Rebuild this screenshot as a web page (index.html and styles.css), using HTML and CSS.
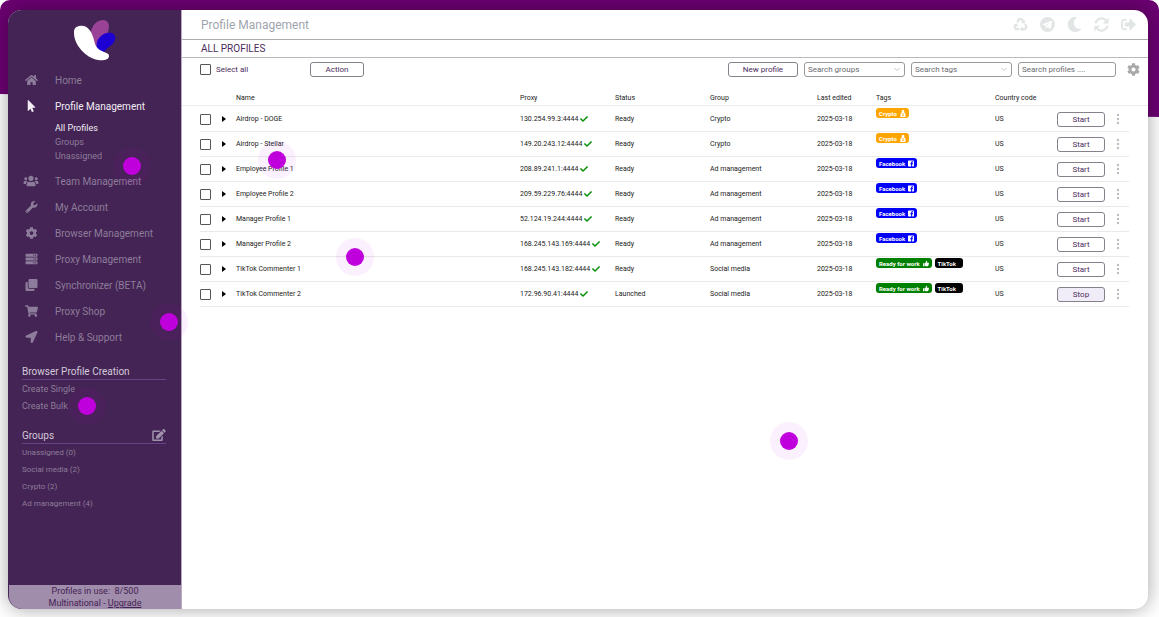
FILE: index.html
```html
<!DOCTYPE html>
<html lang="en">
<head>
<meta charset="utf-8">
<meta name="viewport" content="width=device-width, initial-scale=1">
<title>Profile Management</title>
<link rel="stylesheet" href="styles.css">
</head>
<body>
<svg class="sprite" aria-hidden="true">
  <symbol id="home" viewBox="0 0 576 512"><path d="M280.37 148.26L96 300.11V464a16 16 0 0 0 16 16l112.06-.29a16 16 0 0 0 15.92-16V368a16 16 0 0 1 16-16h64a16 16 0 0 1 16 16v95.64a16 16 0 0 0 16 16.05L464 480a16 16 0 0 0 16-16V300L295.67 148.26a12.19 12.19 0 0 0-15.3 0zM571.6 251.47L488 182.56V44.05a12 12 0 0 0-12-12h-56a12 12 0 0 0-12 12v72.61L318.47 43a48 48 0 0 0-61 0L4.34 251.47a12 12 0 0 0-1.6 16.9l25.5 31A12 12 0 0 0 45.15 301l235.22-193.74a12.19 12.19 0 0 1 15.3 0L530.9 301a12 12 0 0 0 16.9-1.6l25.5-31a12 12 0 0 0-1.7-16.93z"/></symbol>
  <symbol id="pointer" viewBox="0 0 320 512"><path d="M302.189 329.126H196.105l55.831 135.993c3.889 9.428-.555 19.999-9.444 23.999l-49.165 21.427c-9.165 4-19.443-.571-23.332-9.714l-53.053-129.136-86.664 89.138C18.729 472.71 0 463.554 0 447.977V18.299C0 1.899 19.921-6.096 30.277 5.443l284.412 292.542c11.472 11.179 3.007 31.141-12.5 31.141z"/></symbol>
  <symbol id="users" viewBox="0 0 640 512"><path d="M96 224c35.3 0 64-28.7 64-64s-28.7-64-64-64-64 28.7-64 64 28.7 64 64 64zm448 0c35.3 0 64-28.7 64-64s-28.7-64-64-64-64 28.7-64 64 28.7 64 64 64zm32 32h-64c-17.6 0-33.5 7.1-45.1 18.6 40.3 22.1 68.9 62 75.1 109.4h66c17.7 0 32-14.3 32-32v-32c0-35.3-28.7-64-64-64zm-256 0c61.9 0 112-50.1 112-112S381.9 32 320 32 208 82.1 208 144s50.1 112 112 112zm76.8 32h-8.3c-20.8 10-43.9 16-68.5 16s-47.6-6-68.5-16h-8.3C179.6 288 128 339.6 128 403.2V432c0 26.5 21.5 48 48 48h288c26.5 0 48-21.5 48-48v-28.8c0-63.6-51.6-115.2-115.2-115.2zm-223.7-13.4C161.5 263.1 145.6 256 128 256H64c-35.3 0-64 28.7-64 64v32c0 17.7 14.3 32 32 32h65.9c6.3-47.4 34.9-87.3 75.2-109.4z"/></symbol>
  <symbol id="wrench" viewBox="0 0 512 512"><path d="M507.73 109.1c-2.24-9.03-13.54-12.09-20.12-5.51l-74.36 74.36-67.88-11.31-11.31-67.88 74.36-74.36c6.62-6.62 3.43-17.9-5.66-20.16-47.38-11.74-99.55.91-136.58 37.93-39.64 39.64-50.55 97.1-34.05 147.2L18.74 402.76c-24.99 24.99-24.99 65.51 0 90.5 24.99 24.99 65.51 24.99 90.5 0l213.21-213.21c50.12 16.71 107.47 5.68 147.37-34.22 37.07-37.07 49.7-89.32 37.91-136.73zM64 472c-13.25 0-24-10.75-24-24s10.75-24 24-24 24 10.75 24 24-10.75 24-24 24z"/></symbol>
  <symbol id="cog" viewBox="0 0 512 512"><path d="M487.4 315.7l-42.6-24.6c4.3-23.2 4.3-47 0-70.2l42.6-24.6c4.9-2.8 7.1-8.6 5.5-14-11.1-35.6-30-67.8-54.7-94.6-3.8-4.1-10-5.1-14.8-2.3L380.8 110c-17.9-15.4-38.5-27.3-60.8-35.1V25.8c0-5.6-3.9-10.5-9.4-11.7-36.7-8.2-74.3-7.8-109.2 0-5.5 1.2-9.4 6.1-9.4 11.7V75c-22.2 7.9-42.8 19.8-60.8 35.1L88.7 85.5c-4.9-2.8-11-1.9-14.8 2.3-24.7 26.7-43.6 58.9-54.7 94.6-1.7 5.4.6 11.2 5.5 14L67.3 221c-4.3 23.2-4.3 47 0 70.2l-42.6 24.6c-4.9 2.8-7.1 8.6-5.5 14 11.1 35.6 30 67.8 54.7 94.6 3.8 4.1 10 5.1 14.8 2.3l42.6-24.6c17.9 15.4 38.5 27.3 60.8 35.1v49.2c0 5.6 3.9 10.5 9.4 11.7 36.7 8.2 74.3 7.8 109.2 0 5.5-1.2 9.4-6.1 9.4-11.7v-49.2c22.2-7.9 42.8-19.8 60.8-35.1l42.6 24.6c4.9 2.8 11 1.9 14.8-2.3 24.7-26.7 43.6-58.9 54.7-94.6 1.5-5.5-.7-11.3-5.6-14.1zM256 336c-44.1 0-80-35.9-80-80s35.9-80 80-80 80 35.9 80 80-35.9 80-80 80z"/></symbol>
  <symbol id="server" viewBox="0 0 512 512"><path fill-rule="evenodd" d="M32 32h448a32 32 0 0 1 32 32v64a32 32 0 0 1-32 32H32a32 32 0 0 1-32-32V64a32 32 0 0 1 32-32zM32 192h448a32 32 0 0 1 32 32v64a32 32 0 0 1-32 32H32a32 32 0 0 1-32-32v-64a32 32 0 0 1 32-32zM32 352h448a32 32 0 0 1 32 32v64a32 32 0 0 1-32 32H32a32 32 0 0 1-32-32v-64a32 32 0 0 1 32-32zM408 72h48v48h-48zM408 232h48v48h-48zM408 392h48v48h-48zM336 72h40v48h-40zM336 232h40v48h-40zM336 392h40v48h-40z"/></symbol>
  <symbol id="clone" viewBox="0 0 512 512"><path d="M176 0h288a48 48 0 0 1 48 48v288a48 48 0 0 1-48 48H176a48 48 0 0 1-48-48V48a48 48 0 0 1 48-48zM48 128h48v208a80 80 0 0 0 80 80h208v48a48 48 0 0 1-48 48H48a48 48 0 0 1-48-48V176a48 48 0 0 1 48-48z"/></symbol>
  <symbol id="cart" viewBox="0 0 576 512"><path d="M528.12 301.319l47.273-208C578.806 78.301 567.391 64 551.99 64H159.208l-9.166-44.81C147.758 8.021 137.93 0 126.529 0H24C10.745 0 0 10.745 0 24v16c0 13.255 10.745 24 24 24h69.883l70.248 343.435C147.325 417.1 136 435.222 136 456c0 30.928 25.072 56 56 56s56-25.072 56-56c0-15.674-6.447-29.835-16.824-40h209.647C430.447 426.165 424 440.326 424 456c0 30.928 25.072 56 56 56s56-25.072 56-56c0-22.172-12.888-41.332-31.579-50.405l5.517-24.276c3.413-15.018-8.002-29.319-23.403-29.319H218.117l-6.545-32h293.145c11.206 0 20.92-7.754 23.403-18.681z"/></symbol>
  <symbol id="arrow" viewBox="0 0 512 512"><path d="M444.52 3.52L28.74 195.42c-47.97 22.39-31.98 92.75 19.19 92.75h175.91v175.91c0 51.17 70.36 67.17 92.75 19.19l191.9-415.78c15.99-38.39-25.59-79.97-63.97-63.97z"/></symbol>
  <symbol id="edit" viewBox="0 0 576 512"><path d="M402.6 83.2l90.2 90.2c3.8 3.8 3.8 10 0 13.8L274.4 405.6l-92.8 10.3c-12.4 1.4-22.9-9.1-21.5-21.5l10.3-92.8L388.8 83.2c3.8-3.8 10-3.8 13.8 0zm162-22.9l-48.8-48.8c-15.2-15.2-39.9-15.2-55.2 0l-35.4 35.4c-3.8 3.8-3.8 10 0 13.8l90.2 90.2c3.8 3.8 10 3.8 13.8 0l35.4-35.4c15.2-15.3 15.2-40 0-55.2zM384 346.2V448H64V128h229.8c3.2 0 6.2-1.3 8.5-3.5l40-40c7.6-7.6 2.2-20.5-8.500-20.5H48C21.500 64 0 85.500 0 112v352c0 26.500 21.500 48 48 48h352c26.500 0 48-21.500 48-48V306.200c0-10.700-12.900-16-20.500-8.500l-40 40c-2.200 2.300-3.500 5.300-3.500 8.500z"/></symbol>
  <symbol id="recycle" viewBox="0 0 16 16"><g fill="none" stroke="currentColor" stroke-width="2.4"><path d="M4.4 5.8L6.6 2.2h2.600l1.700 2.700"/><path d="M12.800 7.800l1.500 2.600-1.300 2.400H9.600"/><path d="M6.800 12.800H3l-1.300-2.400 1.500-2.600"/></g><path d="M12.600 2.900v4.200L8.700 6zM10.200 9.900v5.800L7.200 12.800zM.4 7.900l4.200-1.100 1 4z"/></symbol>
  <symbol id="telegram" viewBox="0 0 16 16"><path fill-rule="evenodd" d="M8 0a8 8 0 1 1 0 16A8 8 0 0 1 8 0zM12.300 4L3.400 7.500c-.5.200-.5.600 0 .8l2.100.7.9 2.800c.1.300.4.400.7.100l1.300-1.200 2.300 1.700c.4.300.8.100.9-.4l1.400-7.400c.100-.5-.2-.8-.700-.6zM10.700 5.900L6.900 9.300l-.2 1.500-.6-2z"/></symbol>
  <symbol id="moon" viewBox="0 0 512 512"><path d="M283.211 512c78.962 0 151.079-35.925 198.857-94.792 7.068-8.708-.639-21.43-11.562-19.35-124.203 23.654-238.262-71.576-238.262-196.954 0-72.222 38.662-138.635 101.498-174.394 9.686-5.512 7.25-20.197-3.756-22.23A258.156 258.156 0 0 0 283.211 0c-141.309 0-256 114.511-256 256 0 141.309 114.511 256 256 256z"/></symbol>
  <symbol id="sync" viewBox="0 0 16 16"><g fill="none" stroke="currentColor" stroke-width="2.2"><path d="M1.600 6.800A6.500 6.500 0 0 1 13 3.900"/><path d="M14.400 9.200A6.500 6.500 0 0 1 3 12.100"/></g><path d="M15.600.6v6.200H9.400zM.4 15.400V9.200h6.200z"/></symbol>
  <symbol id="exit" viewBox="0 0 512 512"><path d="M497 273L329 441c-15 15-41 4.500-41-17v-96H152c-13.300 0-24-10.700-24-24v-96c0-13.300 10.700-24 24-24h136V88c0-21.400 25.900-32 41-17l168 168c9.300 9.400 9.300 24.600 0 34zM192 436v-40c0-6.600-5.400-12-12-12H96c-17.700 0-32-14.300-32-32V160c0-17.700 14.300-32 32-32h84c6.600 0 12-5.400 12-12V76c0-6.600-5.400-12-12-12H96c-53 0-96 43-96 96v192c0 53 43 96 96 96h84c6.600 0 12-5.400 12-12z"/></symbol>
  <symbol id="check" viewBox="0 0 512 512"><path d="M173.898 439.404l-166.4-166.4c-9.997-9.997-9.997-26.206 0-36.204l36.203-36.204c9.997-9.998 26.207-9.998 36.204 0L192 312.69 432.095 72.596c9.997-9.997 26.207-9.997 36.204 0l36.203 36.204c9.997 9.997 9.997 26.206 0 36.204l-294.4 294.401c-9.998 9.997-26.207 9.997-36.204-.001z"/></symbol>
  <symbol id="dots" viewBox="0 0 4 12"><circle cx="2" cy="2" r="1.200"/><circle cx="2" cy="6" r="1.200"/><circle cx="2" cy="10" r="1.200"/></symbol>
  <symbol id="caret" viewBox="0 0 4 6"><path d="M0 0l4 3-4 3z"/></symbol>
  <symbol id="chevron" viewBox="0 0 8 5"><path d="M1.500 1L4 3.500 6.500 1" fill="none" stroke="currentColor"/></symbol>
  <symbol id="bag" viewBox="0 0 14 16"><path fill-rule="evenodd" d="M4 0h6L9 3.200h1.500L10 5.500l3 3.500v7H1V9l3-3.500-.5-2.300H5zM5 7.500v1.300h4V7.500zM5 10.500v3h4v-3z"/></symbol>
  <symbol id="fb" viewBox="0 0 16 16"><path d="M2 0h12a2 2 0 0 1 2 2v12a2 2 0 0 1-2 2h-3v-6h2.200l.4-2.500H11V6c0-.800.400-1.300 1.400-1.300h1.300V2.400C11 1.900 8.400 2.400 8.400 5.700v1.800H6V10h2.400v6H2a2 2 0 0 1-2-2V2a2 2 0 0 1 2-2z"/></symbol>
  <symbol id="thumb" viewBox="0 0 16 16"><path d="M0 7h3.500v8H0zM4.500 7.500L8 4l.5-3.500C10 0 11.500 1 11.200 3l-.7 3H15c1.300.5 1.300 1.800.4 2.500.5.900.2 1.800-.5 2.200.3.900 0 1.600-.6 2 .2 1.400-.5 2.300-2 2.300H8c-1.500 0-2.500-.7-3.500-1.300z"/></symbol>
</svg>

<div class="page">
  <div class="band"></div>
  <div class="app">
    <aside class="sidebar">
      <svg class="logo" viewBox="0 0 44 44" role="img" aria-label="Logo">
        <path fill="#9a4296" d="M18 14C19 7 24 2 30 2c6 0 7 6 5 12-2 7-8 11-11 16-3-6-6-10-6-16z"/>
        <path fill="#1d00d2" d="M24 30c-1-5 0-8 3-11 3-4 8-5 12-4 4 2 4 6 2 9-2 4-9 6-10 11-4 0-6-2-7-5z"/>
        <path fill="#fff" d="M6 8c8-2 13 5 15 14 1 5 3 9 8 11 4 2 7 2 7 5 0 4-6 5-11 4C13 40 1 27 1 15c0-4 1-6 5-7z"/>
      </svg>
      <nav class="nav" aria-label="Main">
        <a class="nav-item" href="#"><svg class="icon"><use href="#home"/></svg>Home</a>
        <a class="nav-item active" href="#"><svg class="icon"><use href="#pointer"/></svg>Profile Management</a>
        <div class="subnav">
          <a class="active" href="#">All Profiles</a>
          <a href="#">Groups</a>
          <a href="#">Unassigned</a>
        </div>
        <a class="nav-item" href="#"><svg class="icon wide"><use href="#users"/></svg>Team Management</a>
        <a class="nav-item" href="#"><svg class="icon"><use href="#wrench"/></svg>My Account</a>
        <a class="nav-item" href="#"><svg class="icon"><use href="#cog"/></svg>Browser Management</a>
        <a class="nav-item" href="#"><svg class="icon"><use href="#server"/></svg>Proxy Management</a>
        <a class="nav-item" href="#"><svg class="icon"><use href="#clone"/></svg>Synchronizer (BETA)</a>
        <a class="nav-item" href="#"><svg class="icon"><use href="#cart"/></svg>Proxy Shop</a>
        <a class="nav-item" href="#"><svg class="icon"><use href="#arrow"/></svg>Help &amp; Support</a>
      </nav>
      <section class="side-section create">
        <h2>Browser Profile Creation</h2>
        <a href="#">Create Single</a>
        <a href="#">Create Bulk</a>
      </section>
      <section class="side-section groups">
        <h2>Groups <button class="plain" aria-label="Edit groups"><svg><use href="#edit"/></svg></button></h2>
        <a href="#">Unassigned (0)</a>
        <a href="#">Social media (2)</a>
        <a href="#">Crypto (2)</a>
        <a href="#">Ad management (4)</a>
      </section>
      <footer class="usage">
        <div>Profiles in use: &nbsp;8/500</div>
        <div>Multinational - <a href="#">Upgrade</a></div>
      </footer>
    </aside>

    <main class="main">
      <header class="topbar">
        <h1>Profile Management</h1>
        <div class="top-icons">
          <button class="plain" aria-label="Recycle bin"><svg><use href="#recycle"/></svg></button>
          <button class="plain" aria-label="Telegram"><svg><use href="#telegram"/></svg></button>
          <button class="plain" aria-label="Dark mode"><svg><use href="#moon"/></svg></button>
          <button class="plain" aria-label="Refresh"><svg><use href="#sync"/></svg></button>
          <button class="plain" aria-label="Sign out"><svg><use href="#exit"/></svg></button>
        </div>
      </header>
      <h2 class="section-title">ALL PROFILES</h2>
      <div class="toolbar">
        <label class="select-all"><input class="tick" type="checkbox">Select all</label>
        <button class="btn action">Action</button>
        <button class="btn new">New profile</button>
        <div class="pick"><select class="field" aria-label="Search groups"><option>Search groups</option></select><svg><use href="#chevron"/></svg></div>
        <div class="pick"><select class="field" aria-label="Search tags"><option>Search tags</option></select><svg><use href="#chevron"/></svg></div>
        <input class="field search" type="text" placeholder="Search profiles ...." aria-label="Search profiles">
        <button class="plain settings" aria-label="Table settings"><svg><use href="#cog"/></svg></button>
      </div>
      <div class="table-wrap">
        <table class="profiles">
          <colgroup><col class="c-tick"><col class="c-caret"><col><col class="c-proxy"><col class="c-status"><col class="c-group"><col class="c-date"><col class="c-tags"><col class="c-country"><col class="c-run"><col class="c-more"></colgroup>
          <thead><tr><th></th><th></th><th>Name</th><th>Proxy</th><th>Status</th><th>Group</th><th>Last edited</th><th>Tags</th><th>Country code</th><th></th><th></th></tr></thead>
          <tbody>
            <tr><td><input class="tick" type="checkbox" aria-label="Airdrop - DOGE"></td><td><button class="plain caret" aria-label="Expand"><svg><use href="#caret"/></svg></button></td><td>Airdrop - DOGE</td><td><div class="proxy">130.254.99.3:4444 <svg><use href="#check"/></svg></div></td><td>Ready</td><td>Crypto</td><td>2025-03-18</td><td class="tags"><div><span class="tag orange">Crypto <svg><use href="#bag"/></svg></span></div></td><td>US</td><td><button class="btn run">Start</button></td><td><button class="plain more" aria-label="More"><svg><use href="#dots"/></svg></button></td></tr>
            <tr><td><input class="tick" type="checkbox" aria-label="Airdrop - Stellar"></td><td><button class="plain caret" aria-label="Expand"><svg><use href="#caret"/></svg></button></td><td>Airdrop - Stellar</td><td><div class="proxy">149.20.243.12:4444 <svg><use href="#check"/></svg></div></td><td>Ready</td><td>Crypto</td><td>2025-03-18</td><td class="tags"><div><span class="tag orange">Crypto <svg><use href="#bag"/></svg></span></div></td><td>US</td><td><button class="btn run">Start</button></td><td><button class="plain more" aria-label="More"><svg><use href="#dots"/></svg></button></td></tr>
            <tr><td><input class="tick" type="checkbox" aria-label="Employee Profile 1"></td><td><button class="plain caret" aria-label="Expand"><svg><use href="#caret"/></svg></button></td><td>Employee Profile 1</td><td><div class="proxy">208.89.241.1:4444 <svg><use href="#check"/></svg></div></td><td>Ready</td><td>Ad management</td><td>2025-03-18</td><td class="tags"><div><span class="tag blue">Facebook <svg><use href="#fb"/></svg></span></div></td><td>US</td><td><button class="btn run">Start</button></td><td><button class="plain more" aria-label="More"><svg><use href="#dots"/></svg></button></td></tr>
            <tr><td><input class="tick" type="checkbox" aria-label="Employee Profile 2"></td><td><button class="plain caret" aria-label="Expand"><svg><use href="#caret"/></svg></button></td><td>Employee Profile 2</td><td><div class="proxy">209.59.229.76:4444 <svg><use href="#check"/></svg></div></td><td>Ready</td><td>Ad management</td><td>2025-03-18</td><td class="tags"><div><span class="tag blue">Facebook <svg><use href="#fb"/></svg></span></div></td><td>US</td><td><button class="btn run">Start</button></td><td><button class="plain more" aria-label="More"><svg><use href="#dots"/></svg></button></td></tr>
            <tr><td><input class="tick" type="checkbox" aria-label="Manager Profile 1"></td><td><button class="plain caret" aria-label="Expand"><svg><use href="#caret"/></svg></button></td><td>Manager Profile 1</td><td><div class="proxy">52.124.19.244:4444 <svg><use href="#check"/></svg></div></td><td>Ready</td><td>Ad management</td><td>2025-03-18</td><td class="tags"><div><span class="tag blue">Facebook <svg><use href="#fb"/></svg></span></div></td><td>US</td><td><button class="btn run">Start</button></td><td><button class="plain more" aria-label="More"><svg><use href="#dots"/></svg></button></td></tr>
            <tr><td><input class="tick" type="checkbox" aria-label="Manager Profile 2"></td><td><button class="plain caret" aria-label="Expand"><svg><use href="#caret"/></svg></button></td><td>Manager Profile 2</td><td><div class="proxy">168.245.143.169:4444 <svg><use href="#check"/></svg></div></td><td>Ready</td><td>Ad management</td><td>2025-03-18</td><td class="tags"><div><span class="tag blue">Facebook <svg><use href="#fb"/></svg></span></div></td><td>US</td><td><button class="btn run">Start</button></td><td><button class="plain more" aria-label="More"><svg><use href="#dots"/></svg></button></td></tr>
            <tr><td><input class="tick" type="checkbox" aria-label="TikTok Commenter 1"></td><td><button class="plain caret" aria-label="Expand"><svg><use href="#caret"/></svg></button></td><td>TikTok Commenter 1</td><td><div class="proxy">168.245.143.182:4444 <svg><use href="#check"/></svg></div></td><td>Ready</td><td>Social media</td><td>2025-03-18</td><td class="tags"><div><span class="tag green">Ready for work <svg><use href="#thumb"/></svg></span><span class="tag black">TikTok</span></div></td><td>US</td><td><button class="btn run">Start</button></td><td><button class="plain more" aria-label="More"><svg><use href="#dots"/></svg></button></td></tr>
            <tr><td><input class="tick" type="checkbox" aria-label="TikTok Commenter 2"></td><td><button class="plain caret" aria-label="Expand"><svg><use href="#caret"/></svg></button></td><td>TikTok Commenter 2</td><td><div class="proxy">172.96.90.41:4444 <svg><use href="#check"/></svg></div></td><td>Launched</td><td>Social media</td><td>2025-03-18</td><td class="tags"><div><span class="tag green">Ready for work <svg><use href="#thumb"/></svg></span><span class="tag black">TikTok</span></div></td><td>US</td><td><button class="btn run stop">Stop</button></td><td><button class="plain more" aria-label="More"><svg><use href="#dots"/></svg></button></td></tr>
          </tbody>
        </table>
      </div>
    </main>
  </div>
  <button class="hotspot h1" aria-label="Hotspot 1"></button>
  <button class="hotspot h2" aria-label="Hotspot 2"></button>
  <button class="hotspot h3" aria-label="Hotspot 3"></button>
  <button class="hotspot h4" aria-label="Hotspot 4"></button>
  <button class="hotspot h5" aria-label="Hotspot 5"></button>
  <button class="hotspot h6" aria-label="Hotspot 6"></button>
</div>
</body>
</html>
```
FILE: styles.css
```css
* { box-sizing: border-box; }
body {
  margin: 0;
  background: #fff;
  font-family: Roboto, "Liberation Sans", sans-serif;
  font-size: 8px;
  color: #222;
}
a { color: inherit; text-decoration: none; }
h1, h2 { margin: 0; font-weight: 400; }
button, input, select { font-family: inherit; margin: 0; }
svg { display: block; fill: currentColor; }
.sprite { position: absolute; width: 0; height: 0; }

.page {
  position: relative;
  min-height: 100vh;
  padding: 10px 11px 8px 8px;
  display: flex;
  overflow: hidden;
}
.band {
  position: absolute;
  top: 0;
  left: 0;
  right: 0;
  height: 117px;
  border-radius: 10px 10px 0 0;
  background: #6c0072;
  clip-path: polygon(0 0, 100% 0, 100% 100%, 0 94px);
}
.app {
  position: relative;
  flex: 1;
  display: flex;
  border-radius: 14px;
  box-shadow: 0 0 20px rgba(0, 0, 0, .36);
  background: #fff;
  overflow: hidden;
}

/* Sidebar */
.sidebar {
  flex: 0 0 174px;
  display: flex;
  flex-direction: column;
  background: #442454;
  border-right: 1px solid #b9aac2;
  color: #8d7c9b;
}
.logo { width: 44px; height: 44px; margin: 8px 0 5px 65px; }
.nav-item {
  display: grid;
  grid-template-columns: 47px 1fr;
  align-items: center;
  height: 26px;
  font-size: 10px;
}
.nav .active { color: #f2ecf5; }
.icon { width: 13px; height: 12px; margin-left: 17px; }
.icon.wide { width: 16px; margin-left: 15px; }
.subnav {
  display: grid;
  grid-auto-rows: 14px;
  align-items: center;
  padding: 2px 0 5px 47px;
  font-size: 9px;
}
.side-section { display: grid; margin: 0 15px 0 14px; font-size: 9px; align-items: center; }
.side-section h2 {
  display: flex;
  justify-content: space-between;
  align-items: center;
  height: 16px;
  border-bottom: 1px solid #66428a;
  font-size: 10px;
  color: #d3c9da;
}
.side-section h2 svg { width: 14px; height: 12px; color: #a092ad; }
.create { margin-top: 13px; grid-auto-rows: 17px; }
.groups { margin-top: 13px; grid-auto-rows: 17px; font-size: 8px; }
.usage {
  margin: auto 0 0 1px;
  background: #a08cab;
  color: #442454;
  font-size: 9px;
  line-height: 12px;
  text-align: center;
  border-radius: 0 0 0 13px;
}
.usage a { text-decoration: underline; }

/* Main */
.main { flex: 1; min-width: 0; }
.topbar {
  display: flex;
  align-items: center;
  justify-content: space-between;
  height: 30px;
  padding: 0 12px 0 19px;
  border-bottom: 1px solid #aaadb0;
}
.topbar h1 { font-size: 12px; color: #a0a5ad; }
.top-icons { display: flex; gap: 12px; color: #e2e5e5; }
.top-icons svg { width: 15px; height: 15px; }
.section-title {
  height: 18px;
  padding-left: 19px;
  border-bottom: 1px solid #b8babc;
  font-size: 10px;
  line-height: 17px;
  color: #4d2c60;
}
.toolbar {
  display: flex;
  align-items: center;
  gap: 6px;
  height: 22px;
  padding: 0 8px 0 18px;
}
.plain {
  border: 0;
  padding: 0;
  background: none;
  color: inherit;
  display: block;
}
.tick {
  appearance: none;
  display: block;
  width: 11px;
  height: 11px;
  border: 1px solid #555;
  border-radius: 1px;
  background: #fff;
}
.tick:checked { background: #442454; }
.select-all {
  display: flex;
  align-items: center;
  gap: 5px;
  width: 104px;
  font-size: 8px;
  color: #4d2c60;
}
.btn {
  height: 15px;
  padding: 0;
  border: 1px solid #85808a;
  border-radius: 3px;
  background: #fff;
  color: #4d2c60;
  font-size: 8px;
  line-height: 13px;
}
.action { width: 54px; }
.new { width: 70px; margin-left: auto; }
.pick { position: relative; }
.pick svg {
  position: absolute;
  right: 4px;
  top: 5px;
  width: 8px;
  height: 5px;
  color: #c4c4c4;
  pointer-events: none;
}
.field {
  appearance: none;
  display: block;
  width: 101px;
  height: 15px;
  padding: 0 3px;
  border: 1px solid #999;
  border-radius: 3px;
  background: #fff;
  color: #6a6a6f;
  font-size: 8px;
}
.search { width: 98px; }
.field::placeholder { color: #6a6a6f; opacity: 1; }
.settings { margin-left: 5px; color: #a9a9a9; }
.settings svg { width: 13px; height: 13px; }

.table-wrap {
  padding: 9px 19px 0 18px;
  background: linear-gradient(#ececec, #ececec) 0 25px / 100% 1px no-repeat;
}
.profiles {
  width: 100%;
  table-layout: fixed;
  border-collapse: separate;
  border-spacing: 0;
  font-size: 7px;
}
.c-tick { width: 22px; }
.c-caret { width: 14px; }
.c-proxy, .c-status { width: 95px; }
.c-group { width: 107px; }
.c-date { width: 59px; }
.c-tags { width: 119px; }
.c-country { width: 62px; }
.c-run { width: 59px; }
.c-more { width: 13px; }
th, td { padding: 0; text-align: left; font-weight: 400; white-space: nowrap; }
th { height: 18px; }
td { height: 25px; border-bottom: 1px solid #e9e9e9; }
.caret svg { width: 4px; height: 6px; color: #000; }
.proxy { display: flex; align-items: center; gap: 2px; }
.proxy svg { width: 8px; height: 8px; color: #0a910a; }
.run { width: 48px; display: block; }
.stop { background: #f1edf8; }
.more svg { width: 4px; height: 12px; color: #bdbdbd; }
.tags { vertical-align: top; padding-top: 1px; }
.tags div { display: flex; gap: 3px; }
.tag {
  display: flex;
  align-items: center;
  gap: 3px;
  height: 10px;
  padding: 0 3px;
  border-radius: 3px;
  color: #fff;
  font-size: 6px;
  line-height: 9px;
  font-weight: 700;
}
.tag svg { width: 6px; height: 7px; }
.orange { background: #ffa500; }
.blue { background: #0000fa; }
.green { background: #008000; }
.black { background: #000; padding-right: 7px; }

/* Tour markers over the interface */
.hotspot {
  position: absolute;
  width: 18px;
  height: 18px;
  padding: 0;
  border: 0;
  border-radius: 50%;
  background: #c000dc;
  box-shadow: 0 0 0 10px rgba(192, 0, 220, .06);
}
.h1 { left: 123px; top: 157px; }
.h2 { left: 268px; top: 151px; }
.h3 { left: 346px; top: 248px; }
.h4 { left: 160px; top: 313px; }
.h5 { left: 78px; top: 397px; }
.h6 { left: 780px; top: 432px; }
```
